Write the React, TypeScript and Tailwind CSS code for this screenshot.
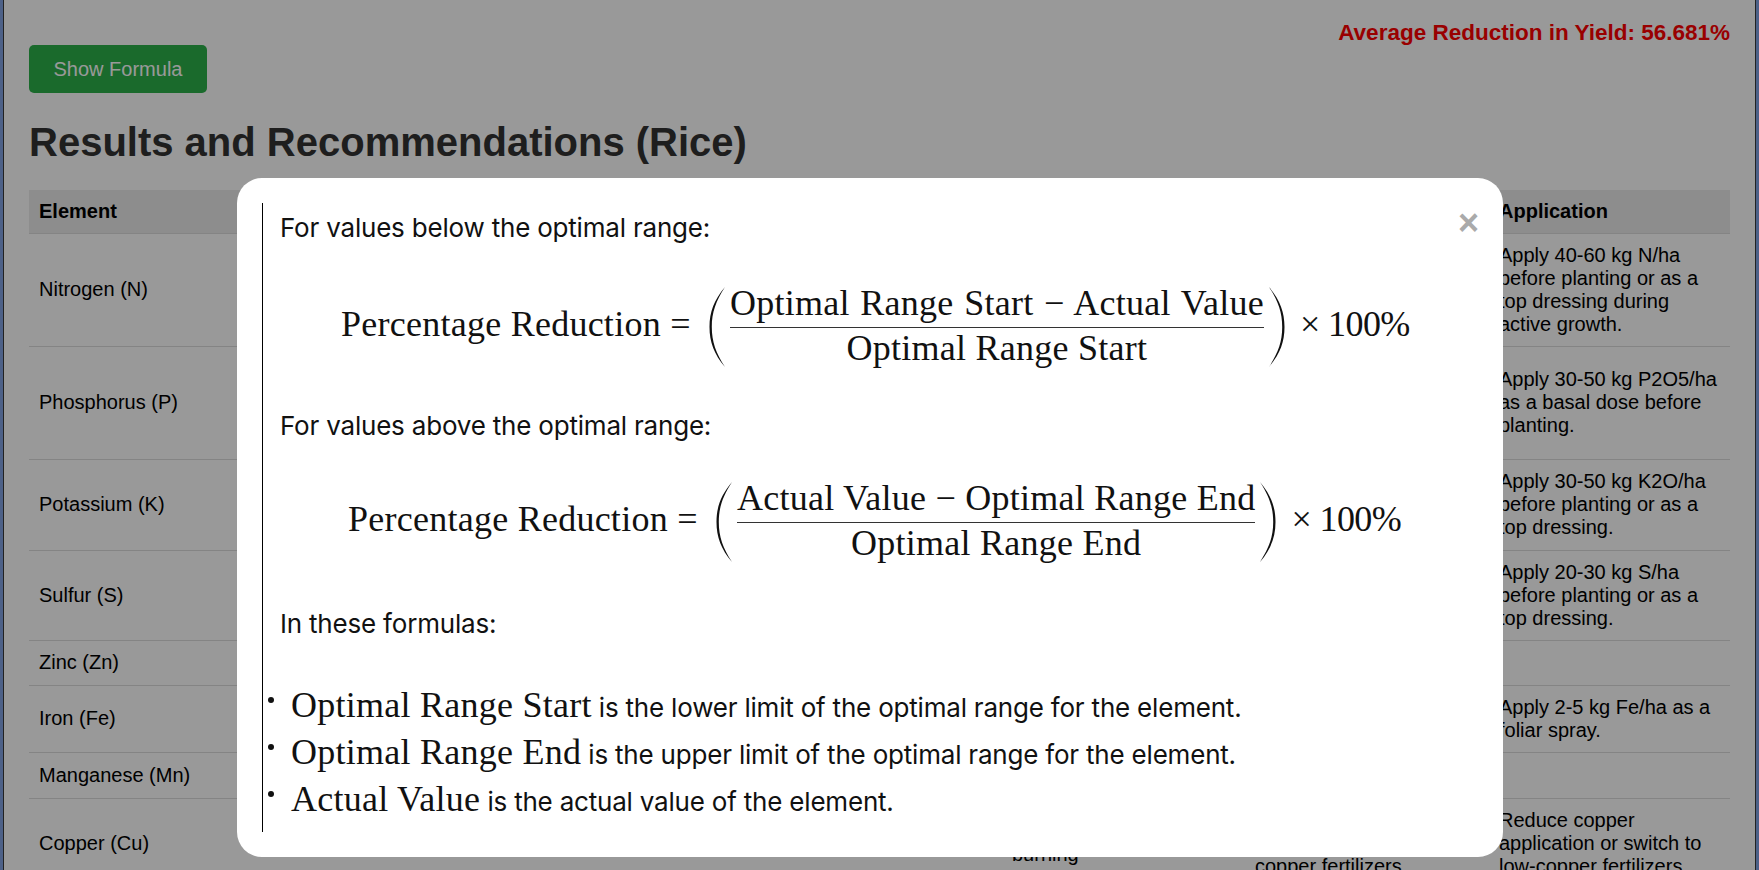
const rows = [
  { name: "Nitrogen (N)", h: "h-[113px]", symptom: "Yellowing of older leaves and stunted growth", fix: "Urea or ammonium sulfate", app: "Apply 40-60 kg N/ha before planting or as a top dressing during active growth." },
  { name: "Phosphorus (P)", h: "h-[113px]", symptom: "Dark green leaves and poor root growth", fix: "Single or triple superphosphate", app: "Apply 30-50 kg P2O5/ha as a basal dose before planting." },
  { name: "Potassium (K)", h: "h-[91px]", symptom: "Brown leaf margins", fix: "Muriate of potash", app: "Apply 30-50 kg K2O/ha before planting or as a top dressing." },
  { name: "Sulfur (S)", h: "h-[90px]", symptom: "Pale young leaves", fix: "Gypsum", app: "Apply 20-30 kg S/ha before planting or as a top dressing." },
  { name: "Zinc (Zn)", h: "h-[45px]", symptom: "", fix: "", app: "" },
  { name: "Iron (Fe)", h: "h-[67px]", symptom: "Interveinal chlorosis", fix: "Ferrous sulfate", app: "Apply 2-5 kg Fe/ha as a foliar spray." },
  { name: "Manganese (Mn)", h: "h-[46px]", symptom: "", fix: "", app: "" },
  { name: "Copper (Cu)", h: "h-[90px]", symptom: "Leaf tip\nburning", fix: "Avoid excess\nuse of\ncopper fertilizers", app: "Reduce copper application or switch to low-copper fertilizers." },
];

const bullets = [
  { term: "Optimal Range Start", rest: "is the lower limit of the optimal range for the element." },
  { term: "Optimal Range End", rest: "is the upper limit of the optimal range for the element." },
  { term: "Actual Value", rest: "is the actual value of the element." },
];

function Paren({ flip }: { flip?: boolean }) {
  return (
    <svg width="18" height="82" viewBox="0 0 18 82" className={flip ? "shrink-0 -scale-x-100" : "shrink-0"}>
      <path d="M17 1C6 14 1.5 26 1.5 41S6 68 17 81C8 67 3.8 56 3.8 41S8 15 17 1Z" fill="#111" />
    </svg>
  );
}

function Formula({ top, bottom, className, topClass = "" }: { top: string; bottom: string; className: string; topClass?: string }) {
  return (
    <div className={`flex items-center font-['Liberation_Serif',serif] text-[36px] leading-none tracking-[0.25px] text-[#111] ${className}`}>
      <span className="mr-[8px] whitespace-pre pb-[5px]">Percentage Reduction = </span>
      <Paren />
      <div className="mx-1 flex flex-col items-center pb-[2px]">
        <span className={`whitespace-pre border-b-[1.5px] border-[#333] pb-[6px] ${topClass}`}>{top}</span>
        <span className="whitespace-pre pt-[2px]">{bottom}</span>
      </div>
      <Paren flip />
      <span className="ml-[14px] whitespace-pre pb-[5px] tracking-[-0.6px]">× 100%</span>
    </div>
  );
}

export default function App() {
  return (
    <div className="h-[870px] overflow-hidden border-x-[3px] border-[#4d6188] font-['Liberation_Sans',Arial,sans-serif] text-[#333]">
      <div className="relative h-full border-x border-[#222] bg-white">
        <div className="px-[25px]">
          <p className="pt-[20px] text-right text-[22.5px] font-bold leading-[26px] text-[#ff0000]">
            Average Reduction in Yield: 56.681%
          </p>
          <button className="-mt-px h-[48px] w-[178px] rounded-[5px] bg-[#2cb14a] text-[20px] text-white">
            Show Formula
          </button>
          <h1 className="mt-[26px] text-[40px] font-bold leading-[46px]">Results and Recommendations (Rice)</h1>
          <table className="mt-[25px] w-full table-fixed border-collapse text-left text-[20px] leading-[23px] text-black">
            <thead>
              <tr className="h-[43px] border-b border-[#ddd] bg-[#ebebeb]">
                <th className="w-[200px] px-[10px] font-bold">Element</th>
                <th className="w-[260px] px-[10px] font-bold">Optimal Range</th>
                <th className="w-[260px] px-[10px] font-bold">Actual Value</th>
                <th className="w-[253px] px-[10px] font-bold">Reduction</th>
                <th className="w-[243px] px-[10px] font-bold">Symptoms</th>
                <th className="w-[244px] px-[10px] font-bold">Fertilizer</th>
                <th className="px-[10px] font-bold">Application</th>
              </tr>
            </thead>
            <tbody>
              {rows.map((row) => (
                <tr key={row.name} className={`${row.h} border-b border-[#ddd]`}>
                  <td className="px-[10px]">{row.name}</td>
                  <td className="px-[10px]" />
                  <td className="px-[10px]" />
                  <td className="px-[10px]" />
                  <td className="whitespace-pre-line px-[10px]">{row.symptom}</td>
                  <td className="whitespace-pre-line px-[10px]">{row.fix}</td>
                  <td className="px-[10px]">{row.app}</td>
                </tr>
              ))}
            </tbody>
          </table>
        </div>

        <div className="absolute inset-0 bg-black/40">
          <div className="relative ml-[233px] mt-[178px] h-[679px] w-[1266px] rounded-[25px] bg-white pt-[25px]">
            <button className="absolute right-[24px] top-[20px] text-[36px] font-bold leading-[50px] text-[#aaa]">×</button>
            <div className="ml-[25px] h-[629px] border-l border-black pt-[10px] font-['Inter',sans-serif] text-[26px] tracking-[-0.2px] text-[#111]">
              <p className="ml-[17px] leading-[30px]">For values below the optimal range:</p>
              <Formula className="ml-[78px] mt-[42px]" topClass="[word-spacing:1.4px]" top="Optimal Range Start − Actual Value" bottom="Optimal Range Start" />
              <p className="ml-[17px] mt-[43px] leading-[30px]">For values above the optimal range:</p>
              <Formula className="ml-[85px] mt-[39px]" top="Actual Value − Optimal Range End" bottom="Optimal Range End" />
              <p className="ml-[17px] mt-[46px] leading-[30px]">In these formulas:</p>
              <ul className="ml-[5px] mt-[49px] flex flex-col gap-[10px]">
                {bullets.map((b) => (
                  <li key={b.term} className="flex items-baseline gap-[17px] leading-[35px]">
                    <span className="relative -top-[14px] size-[6px] shrink-0 rounded-full bg-[#111]" />
                    <span>
                      <span className="font-['Liberation_Serif',serif] text-[36px] tracking-[0.25px]">{b.term}</span> {b.rest}
                    </span>
                  </li>
                ))}
              </ul>
            </div>
          </div>
        </div>
      </div>
    </div>
  );
}
